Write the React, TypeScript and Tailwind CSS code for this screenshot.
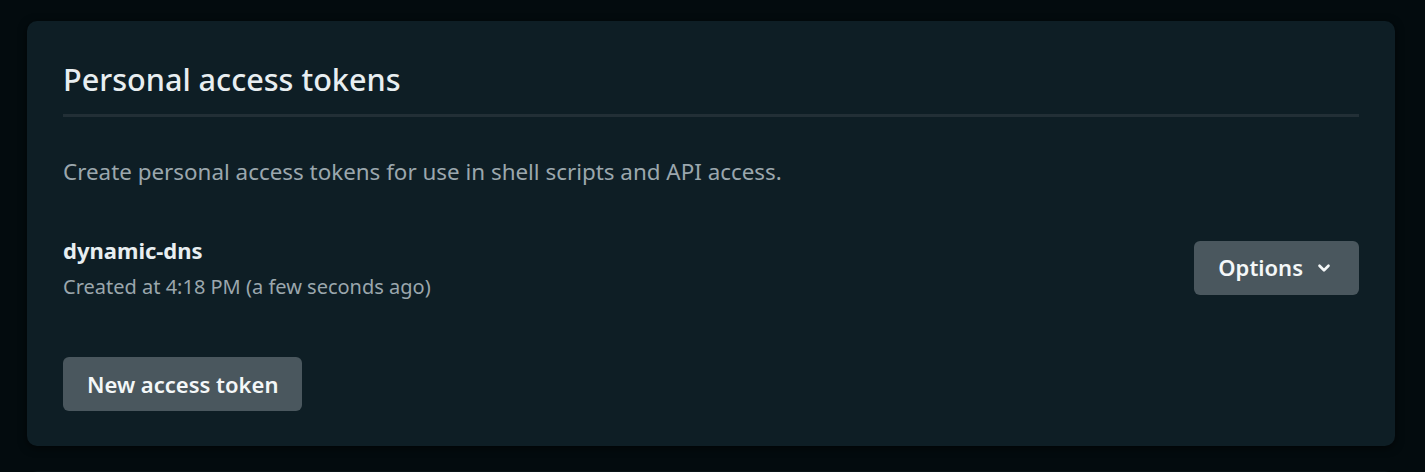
import { ChevronDown } from "lucide-react";

export default function App() {
  return (
    <div
      className="min-h-[472px] bg-[#030b0e] pl-[27px] pr-[30px] pt-[21px]"
      style={{ fontFamily: '"Noto Sans", "Open Sans", sans-serif' }}
    >
      <section className="rounded-[10px] bg-[#0e1e25] px-[36px] pb-[35px] pt-[38px] shadow-[0_2px_8px_rgba(0,0,0,0.6)]">
        <h1 className="text-[30.6px] font-medium leading-[40px] text-[#e8eef1]">Personal access tokens</h1>
        <div className="mt-[15px] h-[3px] bg-[#222f36]" />
        <p className="mt-[40px] text-[22.4px] leading-[30px] text-[#9ba7ad]">
          Create personal access tokens for use in shell scripts and API access.
        </p>
        <div className="mt-[48px] flex items-center justify-between">
          <div>
            <p className="text-[22px] font-bold leading-[30px] text-[#e8eef1]">dynamic-dns</p>
            <p className="mt-[9px] text-[20px] leading-[26px] text-[#9ba7ad]">Created at 4:18 PM (a few seconds ago)</p>
          </div>
          <button className="flex h-[54px] items-center gap-[12px] rounded-[6px] bg-[#4a575e] pl-[24px] pr-[26px] text-[22px] font-semibold text-[#f4f7f8]">
            Options
            <ChevronDown size={18} strokeWidth={3.5} />
          </button>
        </div>
        <button className="mt-[57px] h-[54px] rounded-[6px] bg-[#4a575e] px-[24px] text-[22px] font-semibold text-[#f4f7f8]">
          New access token
        </button>
      </section>
      <div className="mt-[25px] h-[20px] rounded-t-[10px] bg-[#091317]" />
    </div>
  );
}
